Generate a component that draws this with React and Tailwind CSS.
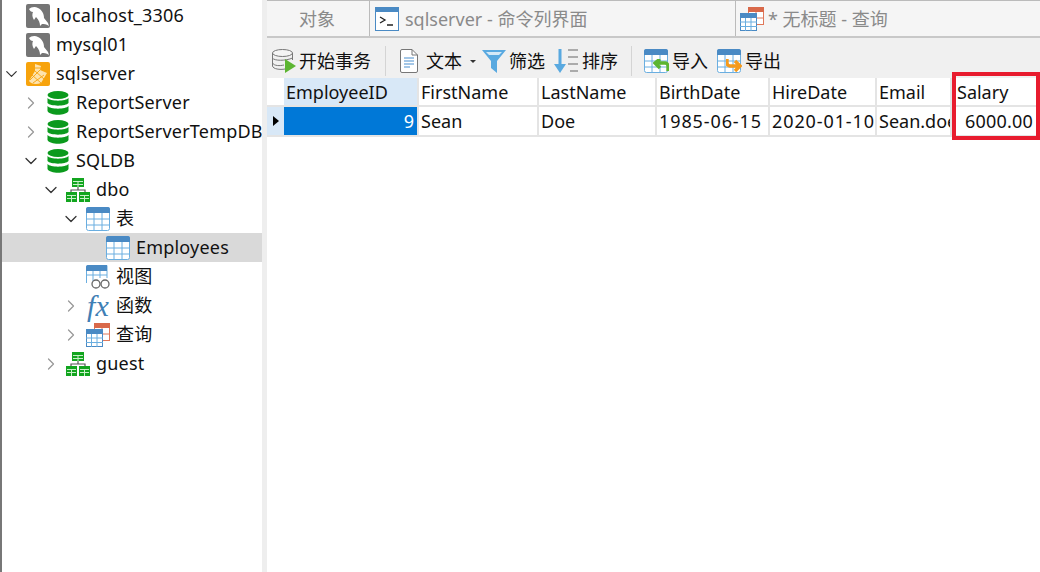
import { ChevronDown, ChevronRight } from 'lucide-react'

function Dolphin() {
  return (
    <svg width="24" height="24" viewBox="0 0 24 24">
      <rect width="24" height="24" rx="2" fill="#757575" />
      <path d="M3 5 C5 3 9 2 12 4 C16 6 18 10 18 14 L22 19 L23 22 C20 20 18 20 16 20 L14 22 C14 19 13 16 10 13 L8 16 C6 13 6 10 7 8 C5 8 4 7 3 5 Z" fill="#fff" />
    </svg>
  )
}

function Server() {
  return (
    <svg width="24" height="24" viewBox="0 0 24 24">
      <rect width="24" height="24" rx="2" fill="#f7a30c" />
      <path d="M9 2 L15 4 L14 8 L21 11 L15 21 C10 23 5 22 3 19 L9 9 Z" fill="#fde3ae" />
      <path d="M4 18 L14 8 M7 21 L18 13 M6 13 L15 21 M9 9 L18 17 M9 6 L15 6" stroke="#f7a30c" strokeWidth="0.9" fill="none" />
    </svg>
  )
}

function Database() {
  return (
    <svg width="22" height="24" viewBox="0 0 22 24">
      <ellipse cx="11" cy="4" rx="10.5" ry="4" fill="#0b9a1d" />
      <path d="M0.5 7 C3 10.5 19 10.5 21.5 7 V12 C19 15.5 3 15.5 0.5 12 Z" fill="#0b9a1d" />
      <path d="M0.5 15 C3 18.5 19 18.5 21.5 15 V20 C19 25 3 25 0.5 20 Z" fill="#0b9a1d" />
    </svg>
  )
}

function Schema() {
  return (
    <svg width="24" height="24" viewBox="0 0 24 24">
      <rect x="6" y="0" width="12" height="9" fill="#12a51f" />
      <path d="M7 3.5 H17 M7 6.5 H17 M12 3 V9" stroke="#c8f0c8" strokeWidth="1" />
      <path d="M12 9 V12 M5 14 V12 H19 V14" stroke="#555" strokeWidth="1.2" fill="none" />
      <rect x="0" y="14" width="11" height="10" fill="#12a51f" />
      <path d="M1 17.5 H10 M1 20.5 H10 M5.5 17 V24" stroke="#c8f0c8" strokeWidth="1" />
      <rect x="13" y="14" width="11" height="10" fill="#12a51f" />
      <path d="M14 17.5 H23 M14 20.5 H23 M18.5 17 V24" stroke="#c8f0c8" strokeWidth="1" />
    </svg>
  )
}

function TableIcon({ size = 24, color = '#4a8ac4', line = '#6aaee0' }) {
  return (
    <svg width={size} height={size} viewBox="0 0 24 24">
      <rect x="0.5" y="0.5" width="23" height="23" rx="2" fill="#fff" stroke={line} />
      <path d="M0 6 V2 A2 2 0 0 1 2 0 H22 A2 2 0 0 1 24 2 V6 Z" fill={color} />
      <path d="M8 6 V24 M16 6 V24 M0 12 H24 M0 18 H24" stroke={line} strokeWidth="1" />
    </svg>
  )
}

function ViewIcon() {
  return (
    <svg width="24" height="24" viewBox="0 0 24 24">
      <path d="M0.5 18 V2 A1.5 1.5 0 0 1 2 0.5 H21 V13" fill="#fff" stroke="#6aaee0" />
      <path d="M0 6 V2 A2 2 0 0 1 2 0 H21 V6 Z" fill="#4a8ac4" />
      <path d="M7 6 V16 M14 6 V13 M0 10 H21" stroke="#6aaee0" strokeWidth="1" />
      <circle cx="10" cy="19" r="4" fill="#fff" stroke="#666" strokeWidth="1.3" />
      <circle cx="19" cy="19" r="4" fill="#fff" stroke="#666" strokeWidth="1.3" />
    </svg>
  )
}

function QueryIcon({ size = 24 }) {
  return (
    <svg width={size} height={size} viewBox="0 0 24 24">
      <rect x="8.5" y="0.5" width="15" height="17" fill="#fff" stroke="#e0785a" />
      <path d="M8 0 H24 V5 H8 Z" fill="#d9694a" />
      <path d="M16 5 V18 M8 11 H24" stroke="#e0785a" strokeWidth="1" />
      <rect x="0.5" y="6.5" width="16" height="17" fill="#fff" stroke="#4a8ac4" />
      <path d="M0 6 H17 V11 H0 Z" fill="#4a8ac4" />
      <path d="M5.5 11 V24 M11 11 V24 M0 15 H17 M0 19.5 H17" stroke="#6aaee0" strokeWidth="1" />
    </svg>
  )
}

function Row({ level, arrow, icon, label, selected }) {
  return (
    <div className={`h-[29px] flex items-center text-[18px] tracking-[0.2px] text-[#111] ${selected ? 'bg-[#d9d9d9]' : ''}`}>
      <div className="shrink-0 flex justify-end" style={{ width: 19 + level * 20 }}>
        {arrow === 'open' && <ChevronDown size={20} strokeWidth={1.5} className="text-[#333]" />}
        {arrow === 'closed' && <ChevronRight size={20} strokeWidth={1.5} className="text-[#999]" />}
      </div>
      <div className="shrink-0 w-[24px] ml-[5px] flex justify-center">{icon}</div>
      <span className="ml-[6px] whitespace-nowrap">{label}</span>
    </div>
  )
}

function Sidebar() {
  return (
    <aside className="w-[262px] shrink-0 border-l-2 border-[#777] pt-px overflow-hidden">
      <Row level={0} icon={<Dolphin />} label="localhost_3306" />
      <Row level={0} icon={<Dolphin />} label="mysql01" />
      <Row level={0} arrow="open" icon={<Server />} label="sqlserver" />
      <Row level={1} arrow="closed" icon={<Database />} label="ReportServer" />
      <Row level={1} arrow="closed" icon={<Database />} label="ReportServerTempDB" />
      <Row level={1} arrow="open" icon={<Database />} label="SQLDB" />
      <Row level={2} arrow="open" icon={<Schema />} label="dbo" />
      <Row level={3} arrow="open" icon={<TableIcon />} label="表" />
      <Row level={4} icon={<TableIcon />} label="Employees" selected />
      <Row level={3} icon={<ViewIcon />} label="视图" />
      <Row
        level={3}
        arrow="closed"
        icon={<span className="font-['Liberation_Serif',serif] italic font-normal text-[30px] leading-none text-[#3f7fb5]">fx</span>}
        label="函数"
      />
      <Row level={3} arrow="closed" icon={<QueryIcon />} label="查询" />
      <Row level={2} arrow="closed" icon={<Schema />} label="guest" />
    </aside>
  )
}

function Tabs() {
  return (
    <div className="h-[38px] flex bg-[#f5f5f5] border-t border-b-2 border-[#c8c8c8] border-t-[#bbb] text-[18px] text-[#8a8a8a]">
      <div className="w-[103px] flex items-center justify-center border-r border-[#bbb] pr-[2px] pt-px">对象</div>
      <div className="w-[366px] flex items-center pl-[5px] gap-[6px] border-r border-[#bbb]">
        <svg width="24" height="24" viewBox="0 0 24 24">
          <rect x="0.5" y="0.5" width="23" height="23" fill="#fff" stroke="#4a8ac4" />
          <rect width="24" height="5" fill="#4a8ac4" />
          <path d="M5 10 L10 13 L5 16 M12 18 H18" stroke="#222" strokeWidth="1.3" fill="none" />
        </svg>
        <span className="pt-px">sqlserver - 命令列界面</span>
      </div>
      <div className="flex items-center pl-[4px] gap-[4px]">
        <QueryIcon />
        <span className="pt-px">* 无标题 - 查询</span>
      </div>
    </div>
  )
}

function ToolButton({ icon, label, className = '' }) {
  return (
    <div className={`flex items-center ${className}`}>
      {icon}
      <span>{label}</span>
    </div>
  )
}

function Divider() {
  return <div className="w-px h-[30px] bg-[#d4d4d4]" />
}

function ImportIcon({ arrow, path }) {
  return (
    <div className="relative w-[24px] h-[24px]">
      <TableIcon />
      <svg className="absolute left-[9px] top-[10px]" width="16" height="14" viewBox="0 0 16 14">
        <path d={path} stroke={arrow} strokeWidth="3.4" fill="none" />
      </svg>
    </div>
  )
}

function Toolbar() {
  return (
    <div className="h-[40px] flex items-center bg-[#f0f0f0] text-[18px] text-[#111] pl-[5px] pt-[6px]">
      <ToolButton
        className="w-[113px] gap-[3px]"
        label="开始事务"
        icon={
          <svg width="24" height="24" viewBox="0 0 24 24">
            <ellipse cx="10.5" cy="4" rx="10" ry="3.5" fill="#f4f4f4" stroke="#777" />
            <path d="M0.5 4 V17 C1 20 8 21 13 20 M0.5 9 C2 12 14 12 20.5 9 M0.5 14 C2 17 8 17 12 16 M20.5 4 V11" stroke="#777" fill="none" />
            <path d="M13 10 L24 17 L13 24 Z" fill="#5cb531" />
          </svg>
        }
      />
      <Divider />
      <ToolButton
        className="ml-[14px] gap-[8px]"
        label="文本"
        icon={
          <svg width="18" height="24" viewBox="0 0 18 24">
            <path d="M0.5 2 A1.5 1.5 0 0 1 2 0.5 H12 L17.5 6 V22 A1.5 1.5 0 0 1 16 23.5 H2 A1.5 1.5 0 0 1 0.5 22 Z" fill="#fff" stroke="#777" />
            <path d="M12 0.5 V6 H17.5" fill="none" stroke="#777" />
            <path d="M4 9 H14 M4 12 H14 M4 15 H14 M4 18 H10" stroke="#4a90d0" strokeWidth="1.2" />
          </svg>
        }
      />
      <div className="ml-[8px] w-0 h-0 border-x-[3px] border-t-[3px] border-x-transparent border-t-[#333]" />
      <ToolButton
        className="ml-[6px] gap-[3px]"
        label="筛选"
        icon={
          <svg width="24" height="24" viewBox="0 0 24 24">
            <path d="M0 1 H24 L15 12 V24 L9 19 V12 Z" fill="#59a9e0" />
            <path d="M4 3 H20 L17 6 H7 Z" fill="#d5e9f7" />
          </svg>
        }
      />
      <ToolButton
        className="ml-[9px] gap-[4px]"
        label="排序"
        icon={
          <svg width="24" height="24" viewBox="0 0 24 24">
            <path d="M6 0 V18" stroke="#59a9e0" strokeWidth="3" />
            <path d="M0 15 H12 L6 24 Z" fill="#59a9e0" />
            <path d="M14 1 H24 M14 8 H24 M14 15 H24 M16 22 H24" stroke="#666" strokeWidth="1.2" />
          </svg>
        }
      />
      <div className="ml-[13px]"><Divider /></div>
      <ToolButton
        className="ml-[12px] gap-[4px]"
        label="导入"
        icon={<ImportIcon arrow="#5cb531" path="M15 12 V7 A3 3 0 0 0 12 4 H3 M7 0 L2 4 L7 9" />}
      />
      <ToolButton
        className="ml-[9px] gap-[4px]"
        label="导出"
        icon={<ImportIcon arrow="#f59a1c" path="M1 0 V4 A3 3 0 0 0 4 7 H13 M9 2 L14 7 L9 12" />}
      />
    </div>
  )
}

const columns = [
  { name: 'FirstName', width: 'w-[120px]', value: 'Sean' },
  { name: 'LastName', width: 'w-[118px]', value: 'Doe' },
  { name: 'BirthDate', width: 'w-[113px]', value: '1985-06-15', spaced: true },
  { name: 'HireDate', width: 'w-[107px]', value: '2020-01-10', spaced: true },
  { name: 'Email', width: 'w-[75px]', value: 'Sean.doe' },
]

function Cell({ width, children, className = '' }) {
  return (
    <div className={`${width} shrink-0 h-full border-r-2 border-[#e4e4e4] pl-[2px] flex items-center overflow-hidden whitespace-nowrap ${className}`}>
      {children}
    </div>
  )
}

function Grid() {
  return (
    <div className="relative text-[18px] text-[#111]">
      <div className="h-[29px] flex border-b-2 border-[#e4e4e4]">
        <div className="w-[17px] shrink-0" />
        <Cell width="w-[135px]" className="bg-[#d8e8f7] border-r-0 pt-px">EmployeeID</Cell>
        {columns.map((c) => (
          <Cell key={c.name} width={c.width} className="pt-px">{c.name}</Cell>
        ))}
        <Cell width="flex-1" className="border-r-0 pl-[5px] pt-px">Salary</Cell>
      </div>
      <div className="h-[30px] flex border-b-2 border-[#e4e4e4]">
        <div className="w-[17px] shrink-0 bg-[#d8e8f7] flex items-center justify-center">
          <div className="w-0 h-0 border-y-[5px] border-l-[6px] border-y-transparent border-l-black" />
        </div>
        <Cell width="w-[135px]" className="bg-[#0078d7] text-white justify-end pr-[3px] border-r-0">9</Cell>
        {columns.map((c) => (
          <Cell key={c.name} width={c.width} className={c.spaced ? 'tracking-[0.9px]' : ''}>{c.value}</Cell>
        ))}
        <Cell width="flex-1" className="border-r-0 justify-end pr-[5px] tracking-[0.2px]">6000.00</Cell>
      </div>
      {/* red highlight drawn on top of the Salary column */}
      <div className="absolute left-[685px] top-[-6px] w-[88px] h-[68px] border-4 border-[#e81c2e]" />
    </div>
  )
}

export default function App() {
  return (
    <div className="w-[1040px] h-[572px] flex bg-white overflow-hidden font-['Noto_Sans','Noto_Sans_CJK_SC',sans-serif]">
      <Sidebar />
      <div className="w-[5px] shrink-0 bg-[#eeeeee]" />
      <main className="flex-1 min-w-0">
        <Tabs />
        <Toolbar />
        <Grid />
      </main>
    </div>
  )
}
